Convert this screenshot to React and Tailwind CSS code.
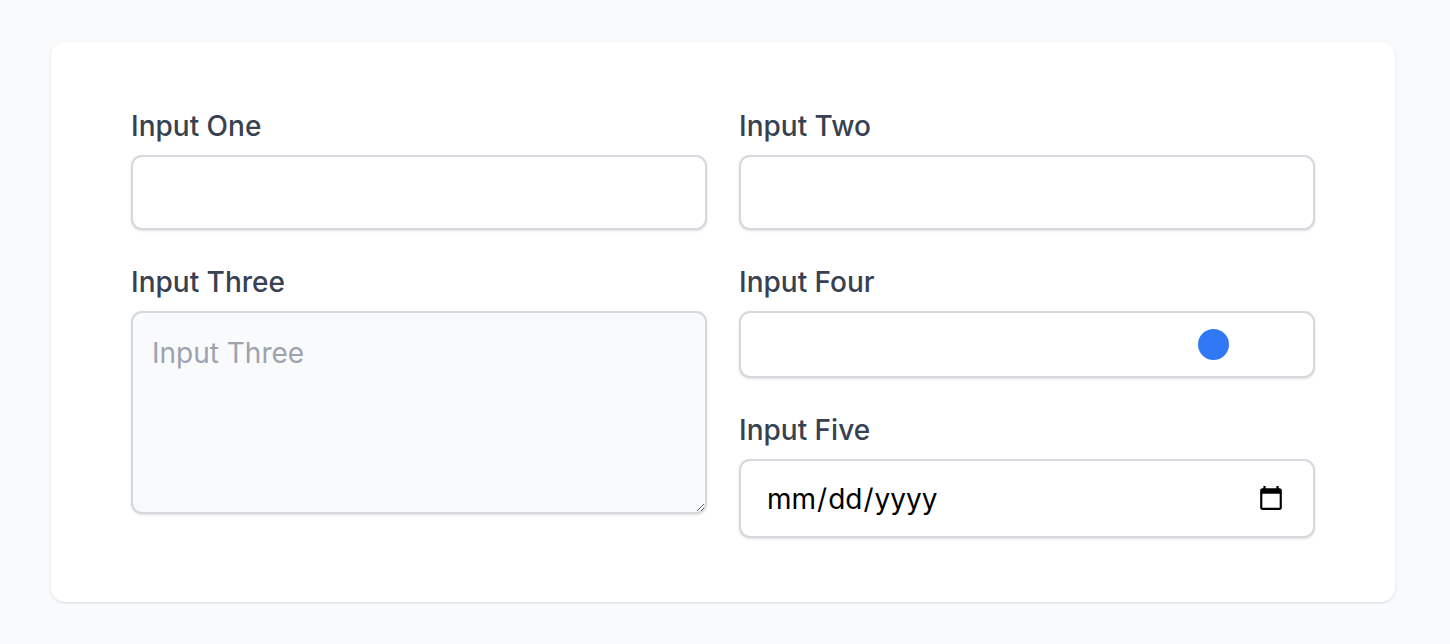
import React from 'react'

const labelCls = "block text-[28px] leading-[36px] font-medium text-[#374151] mb-[11px]"
const boxCls = "w-full rounded-[11px] border-2 border-[#d5d8dd] shadow-sm text-[28px] outline-none"

export default function App() {
  return (
    <div className="min-h-screen bg-[#f9fafb] pt-[42px] pl-[51px]" style={{ fontFamily: 'Inter, "Noto Sans", sans-serif' }}>
      <div className="w-[1344px] bg-white rounded-[14px] shadow-sm px-20 pt-[66px] pb-[64px]">
        <div className="grid grid-cols-2 gap-x-8">

          {/* left column */}
          <div className="flex flex-col gap-[34px]">
            <div>
              <label className={labelCls}>Input One</label>
              <input type="text" className={`${boxCls} bg-white h-[75px] px-5 block`} />
            </div>
            <div>
              <label className={labelCls}>Input Three</label>
              <textarea
                placeholder="Input Three"
                className={`${boxCls} h-[203px] bg-[#f9fafb] px-[19px] pt-[22px] leading-[36px] placeholder:text-[#9ca3af] block`}
              />
            </div>
          </div>

          {/* right column */}
          <div className="flex flex-col gap-[34px]">
            <div>
              <label className={labelCls}>Input Two</label>
              <input type="text" className={`${boxCls} bg-white h-[75px] px-5 block`} />
            </div>
            <div>
              <label className={labelCls}>Input Four</label>
              <input
                type="range"
                min="0"
                max="1000"
                defaultValue="873"
                className={`${boxCls} bg-white h-[67px] px-5 appearance-none block [&::-webkit-slider-runnable-track]:h-[31px] [&::-webkit-slider-thumb]:appearance-none [&::-webkit-slider-thumb]:h-[31px] [&::-webkit-slider-thumb]:w-[31px] [&::-webkit-slider-thumb]:rounded-full [&::-webkit-slider-thumb]:bg-[#3178f6]`}
              />
            </div>
            <div>
              <label className={labelCls}>Input Five</label>
              <input type="date" className={`${boxCls} bg-white h-[79px] pl-[25px] pr-[26px] text-black block`} />
            </div>
          </div>

        </div>
      </div>
    </div>
  )
}
